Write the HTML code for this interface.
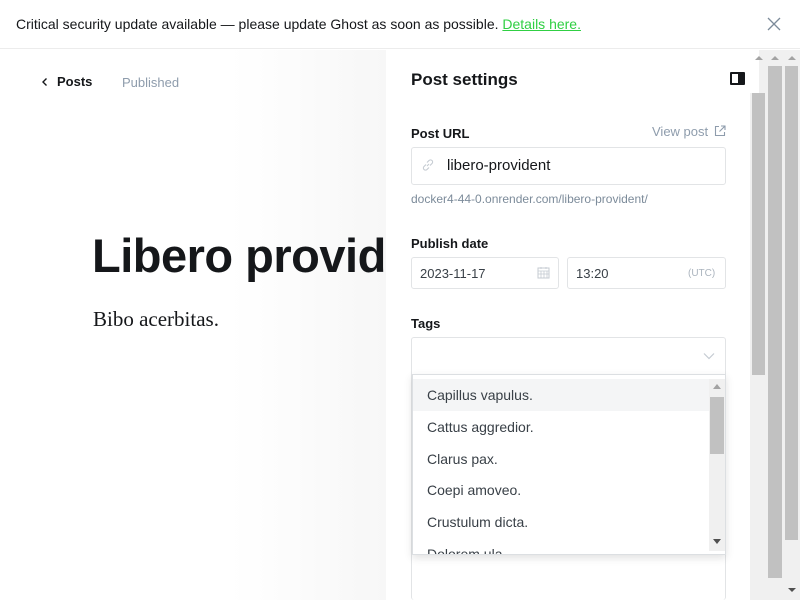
<!DOCTYPE html>
<html><head><meta charset="utf-8"><style>
*{box-sizing:border-box;margin:0;padding:0}
body{width:800px;height:600px;overflow:hidden;background:#fff;font-family:"Liberation Sans",sans-serif;position:relative;color:#15171a}
.abs{position:absolute}
.banner{left:0;top:0;width:800px;height:49px;background:#fff;border-bottom:1px solid #ececec}
.left{left:0;top:50px;width:386px;height:550px;background:linear-gradient(90deg,#fff 0,#fff 230px,#f7f7f7 386px)}
.panel{left:386px;top:50px;width:364px;height:550px;background:#fff}
.lbl{font-size:13px;font-weight:bold;color:#15171a;left:411px}
.inp{border:1px solid #e2e4e6;border-radius:3px;background:#fff}
.sb{background:#f0f0f0}
.th{background:#c1c1c1}
.opt{left:427px;font-size:14px;color:#394047}
</style></head><body>
<div class="abs banner"></div>
<div class="abs" style="left:16px;top:16px;font-size:14px;color:#15171a">Critical security update available — please update Ghost as soon as possible. <span style="color:#30cf43;text-decoration:underline">Details here.</span></div>
<svg class="abs" style="left:767px;top:17px" width="14" height="14" viewBox="0 0 14 14"><path d="M1 1L13 13M13 1L1 13" stroke="#7c8b9a" stroke-width="1.3"/></svg>
<div class="abs left"></div>
<svg class="abs" style="left:41px;top:77px" width="8" height="10" viewBox="0 0 8 10"><path d="M5.5 1.5L2 5l3.5 3.5" fill="none" stroke="#15171a" stroke-width="1.4"/></svg>
<div class="abs" style="left:57px;top:74px;font-size:13px;font-weight:bold;color:#15171a">Posts</div>
<div class="abs" style="left:122px;top:75px;font-size:13px;color:#8e9cac">Published</div>
<div class="abs" style="left:92px;top:228px;font-size:47px;font-weight:bold;letter-spacing:-0.5px;white-space:nowrap;color:#15171a">Libero provident</div>
<div class="abs" style="left:93px;top:307px;font-family:'Liberation Serif',serif;font-size:21px;color:#15171a">Bibo acerbitas.</div>
<div class="abs panel"></div>
<div class="abs" style="left:411px;top:70px;font-size:17px;font-weight:bold">Post settings</div>
<div class="abs" style="left:730px;top:72px;width:15px;height:13px;border:2px solid #15171a;border-radius:1px"><div style="position:absolute;right:0;top:0;width:5px;height:9px;background:#15171a"></div></div>
<div class="abs lbl" style="top:126px">Post URL</div>
<div class="abs" style="left:652px;top:124px;font-size:13px;color:#8e9cac">View post</div>
<svg class="abs" style="left:714px;top:125px" width="12" height="12" viewBox="0 0 12 12"><path d="M5 1.5H1.5v9h9V7M7 1h4v4M11 1L5.5 6.5" fill="none" stroke="#8e9cac" stroke-width="1.1"/></svg>
<div class="abs inp" style="left:411px;top:147px;width:315px;height:38px"></div>
<svg class="abs" style="left:421px;top:158px" width="14" height="14" viewBox="0 0 14 14"><path d="M6 8l2-2M5 6.5L3 8.5a2 2 0 003 3L8 9.5M9 7.5l2-2a2 2 0 00-3-3L6 4.5" fill="none" stroke="#c5cbd2" stroke-width="1.1"/></svg>
<div class="abs" style="left:447px;top:157px;font-size:15px;color:#15171a">libero-provident</div>
<div class="abs" style="left:411px;top:192px;font-size:12px;color:#7c8b9a">docker4-44-0.onrender.com/libero-provident/</div>
<div class="abs lbl" style="top:236px">Publish date</div>
<div class="abs inp" style="left:411px;top:257px;width:148px;height:32px"></div>
<div class="abs" style="left:420px;top:266px;font-size:13px;color:#394047">2023-11-17</div>
<svg class="abs" style="left:537px;top:266px" width="13" height="13" viewBox="0 0 13 13"><rect x="1" y="2" width="11" height="10" fill="none" stroke="#c5cbd2"/><path d="M1 5h11M4 5v7M7 5v7M10 5v7M1 8h11M4 1v2M9 1v2" stroke="#c5cbd2" stroke-width="0.8"/></svg>
<div class="abs inp" style="left:567px;top:257px;width:159px;height:32px"></div>
<div class="abs" style="left:576px;top:266px;font-size:13px;color:#394047">13:20</div>
<div class="abs" style="left:688px;top:268px;font-size:10px;color:#abb4be">(UTC)</div>
<div class="abs lbl" style="top:316px">Tags</div>
<div class="abs inp" style="left:411px;top:337px;width:315px;height:263px;border-bottom:none"></div>
<svg class="abs" style="left:703px;top:352px" width="12" height="8" viewBox="0 0 12 8"><path d="M1 1.5l5 5 5-5" fill="none" stroke="#c5cbd2" stroke-width="1.2"/></svg>
<div class="abs" style="left:412px;top:374px;width:314px;height:181px;background:#fff;border:1px solid #dcdfe2;box-shadow:0 3px 8px rgba(0,0,0,.12);overflow:hidden">
<div style="position:absolute;left:0;top:4px;width:296px;height:32px;background:#f4f5f6"></div>
<div style="position:absolute;left:296px;top:4px;width:16px;height:172px;background:#f0f0f0"></div>
<div style="position:absolute;left:297px;top:22px;width:14px;height:57px;background:#c1c1c1"></div>
<div style="position:absolute;left:300px;top:9px;width:0;height:0;border-left:4px solid transparent;border-right:4px solid transparent;border-bottom:5px solid #a3a3a3"></div>
<div style="position:absolute;left:300px;top:164px;width:0;height:0;border-left:4px solid transparent;border-right:4px solid transparent;border-top:5px solid #505050"></div>
</div>
<div class="abs opt" style="top:387px">Capillus vapulus.</div>
<div class="abs opt" style="top:419px">Cattus aggredior.</div>
<div class="abs opt" style="top:451px">Clarus pax.</div>
<div class="abs opt" style="top:482px">Coepi amoveo.</div>
<div class="abs opt" style="top:514px">Crustulum dicta.</div>
<div class="abs" style="left:427px;top:546px;width:280px;height:8px;overflow:hidden"><div style="font-size:14px;color:#394047">Dolorem ula</div></div>
<div class="abs sb" style="left:750px;top:50px;width:50px;height:550px"></div>
<div class="abs" style="left:750px;top:50px;width:9px;height:43px;background:#fff"></div>
<div class="abs th" style="left:752px;top:93px;width:13px;height:282px"></div>
<div class="abs th" style="left:768px;top:66px;width:14px;height:512px"></div>
<div class="abs th" style="left:785px;top:66px;width:13px;height:474px"></div>
<div class="abs" style="left:755px;top:56px;border-left:4px solid transparent;border-right:4px solid transparent;border-bottom:4px solid #a3a3a3"></div>
<div class="abs" style="left:771px;top:56px;border-left:4px solid transparent;border-right:4px solid transparent;border-bottom:4px solid #a3a3a3"></div>
<div class="abs" style="left:788px;top:56px;border-left:4px solid transparent;border-right:4px solid transparent;border-bottom:4px solid #a3a3a3"></div>
<div class="abs" style="left:788px;top:588px;border-left:4px solid transparent;border-right:4px solid transparent;border-top:4px solid #505050"></div>
</body></html>
